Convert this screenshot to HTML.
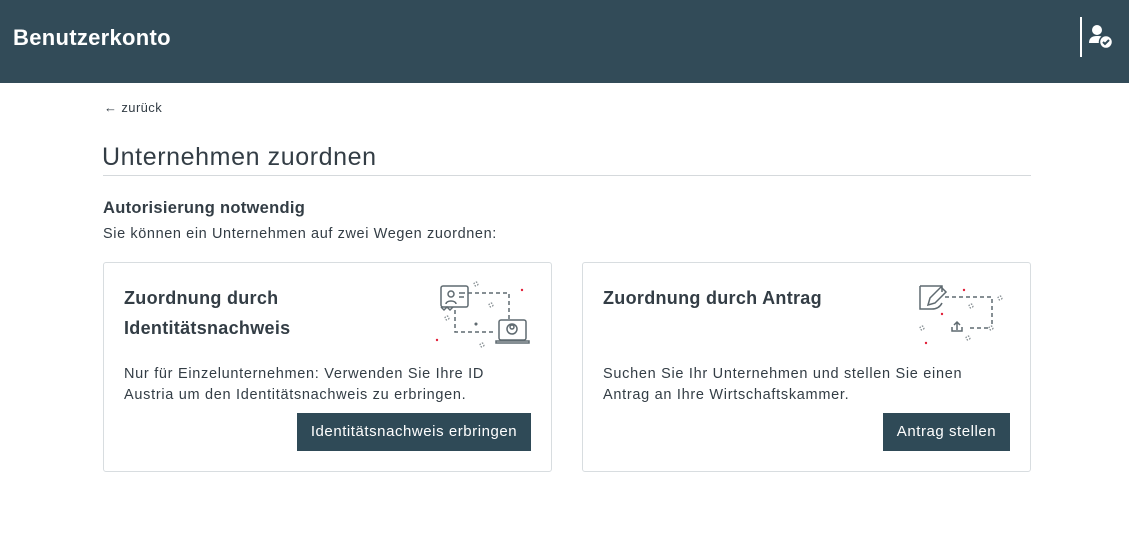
<!DOCTYPE html>
<html><head><meta charset="utf-8"><style>
*{box-sizing:border-box;margin:0;padding:0}
body{width:1129px;height:541px;background:#fff;font-family:"Liberation Sans",sans-serif;color:#333d45;position:relative;overflow:hidden}
.hdr{position:absolute;left:0;top:0;width:1129px;height:83px;background:#324b58}
.hdr h1{position:absolute;left:13px;top:25px;font-size:22px;font-weight:bold;color:#fff;letter-spacing:.3px}
.sep{position:absolute;left:1080px;top:17px;width:2px;height:40px;background:#fff}
.abs{position:absolute}
.card{position:absolute;top:262px;width:449px;height:210px;border:1px solid #d8dde0;border-radius:3px}
.card h3{position:absolute;left:20px;top:20px;font-size:18px;font-weight:bold;line-height:30px;color:#333d45;letter-spacing:.3px}
.card p{position:absolute;left:20px;top:101px;font-size:14.5px;line-height:21px;color:#333d45;letter-spacing:.7px;white-space:nowrap}
.btn{position:absolute;top:150px;height:38px;background:#2f4a57;color:#fff;font-size:15px;line-height:38px;text-align:center;letter-spacing:.55px;white-space:nowrap}
</style></head><body>
<div class="hdr"><h1>Benutzerkonto</h1><div class="sep"></div>
<svg class="abs" style="left:1088px;top:24px" width="26" height="26" viewBox="0 0 26 26"><circle cx="9" cy="6" r="5" fill="#fff"/><path d="M1 19c0-5 3-7 8-7s6 1 7 2v5z" fill="#fff"/><circle cx="18" cy="18" r="6.5" fill="#fff" stroke="#324b58" stroke-width="1.5"/><path d="M15 18l2 2 4-4" stroke="#324b58" stroke-width="2" fill="none"/></svg>
</div>
<div class="abs" style="left:104px;top:100px;font-size:13px;color:#333d45;letter-spacing:.4px">← zurück</div>
<div class="abs" style="left:102px;top:143px;font-size:25px;color:#333d45;letter-spacing:.6px">Unternehmen zuordnen</div>
<div class="abs" style="left:103px;top:175px;width:928px;height:1px;background:#d5d9dc"></div>
<div class="abs" style="left:103px;top:199px;font-size:16.5px;font-weight:bold;letter-spacing:.3px">Autorisierung notwendig</div>
<div class="abs" style="left:103px;top:226px;font-size:14.5px;letter-spacing:.6px">Sie können ein Unternehmen auf zwei Wegen zuordnen:</div>
<div class="card" style="left:103px"><h3>Zuordnung durch<br>Identitätsnachweis</h3>
<p>Nur für Einzelunternehmen: Verwenden Sie Ihre ID<br>Austria um den Identitätsnachweis zu erbringen.</p>
<div class="btn" style="left:193px;width:234px">Identitätsnachweis erbringen</div></div>
<div class="card" style="left:582px"><h3>Zuordnung durch Antrag</h3>
<p>Suchen Sie Ihr Unternehmen und stellen Sie einen<br>Antrag an Ihre Wirtschaftskammer.</p>
<div class="btn" style="left:300px;width:127px">Antrag stellen</div></div>
<svg class="abs" style="left:0;top:0" width="1129" height="541" fill="none" stroke="#5f6a70" stroke-width="1.5">
<rect x="441" y="286" width="27" height="21" rx="2"/><path d="M441 307l3 3 3-3 3 3 3-3" /><circle cx="451" cy="294" r="3"/><path d="M446 304c0-4 10-4 10 0"/><path d="M459 293h6M459 297h5"/>
<path d="M468 293h41v27M455 310v22h41" stroke-dasharray="4 3"/>
<rect x="499" y="320" width="27" height="20" rx="2"/><path d="M496 341h33v2h-33z"/><circle cx="512" cy="329" r="5"/><circle cx="512" cy="327" r="2"/>
<g stroke-dasharray="1.5 1.5" stroke-width="1"><circle cx="476" cy="284" r="2"/><circle cx="491" cy="305" r="2"/><circle cx="447" cy="318" r="2"/><circle cx="482" cy="345" r="2"/>
<circle cx="1000" cy="298" r="2"/><circle cx="971" cy="306" r="2"/><circle cx="922" cy="328" r="2"/><circle cx="968" cy="338" r="2"/><circle cx="991" cy="328" r="2"/></g>
<path d="M920 286h22v6M920 286v23h12" /><path d="M928 305l2-7 11-11 5 5-11 11z"/><path d="M932 309c5 0 8-2 10-6"/>
<path d="M945 297h47v29M988 328h-20" stroke-dasharray="4 3"/>
<path d="M952 327v4h10v-4M957 330v-8M954 325l3-3 3 3"/>
<g stroke="none" fill="#e2203a"><circle cx="522" cy="290" r="1.2"/><circle cx="437" cy="340" r="1.2"/><circle cx="964" cy="290" r="1.2"/><circle cx="942" cy="314" r="1.2"/><circle cx="926" cy="343" r="1.2"/></g>
<circle cx="476" cy="324" r=".8" fill="#6b767c"/>
</svg>
</body></html>
